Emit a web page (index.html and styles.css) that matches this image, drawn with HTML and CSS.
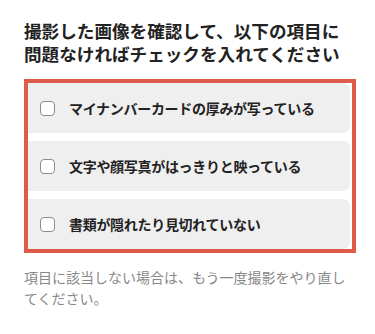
FILE: index.html
```html
<!DOCTYPE html>
<html lang="ja">
<head>
<meta charset="utf-8">
<link rel="stylesheet" href="styles.css">
</head>
<body>
<main class="page">
  <h1 class="title">撮影した画像を確認して、以下の項目に問題なければチェックを入れてください</h1>
  <div class="frame">
    <label class="row"><span class="box"></span><span class="label">マイナンバーカードの厚みが写っている</span></label>
    <label class="row"><span class="box"></span><span class="label">文字や顔写真がはっきりと映っている</span></label>
    <label class="row"><span class="box"></span><span class="label">書類が隠れたり見切れていない</span></label>
  </div>
  <p class="note">項目に該当しない場合は、もう一度撮影をやり直してください。</p>
</main>
</body>
</html>
```
FILE: styles.css
```css
html, body {
  margin: 0;
  padding: 0;
  background: #ffffff;
}
body {
  font-family: "Noto Sans CJK JP", "Noto Sans", sans-serif;
  color: #222222;
}
.page {
  padding: 19px 19px 0 24px;
}
.title {
  margin: 0;
  font-size: 17.6px;
  line-height: 23px;
  font-weight: 700;
  color: #222222;
}
.frame {
  margin-top: 14px;
  border: 4px solid #de5a4a;
  display: flex;
  flex-direction: column;
  gap: 8px;
  padding-right: 2px;
}
.row {
  display: flex;
  align-items: center;
  height: 50px;
  background: #efefef;
  border-radius: 0 7px 7px 0;
  padding-left: 12px;
}
.box {
  width: 13px;
  height: 13px;
  border: 1.5px solid #8c8c8c;
  border-radius: 4px;
  background: #ffffff;
  flex: none;
}
.label {
  margin-left: 14px;
  font-size: 14px;
  font-weight: 700;
  letter-spacing: -0.3px;
  color: #222222;
}
.note {
  margin: 14px 0 0;
  font-size: 14px;
  line-height: 21px;
  color: #888888;
}
```
